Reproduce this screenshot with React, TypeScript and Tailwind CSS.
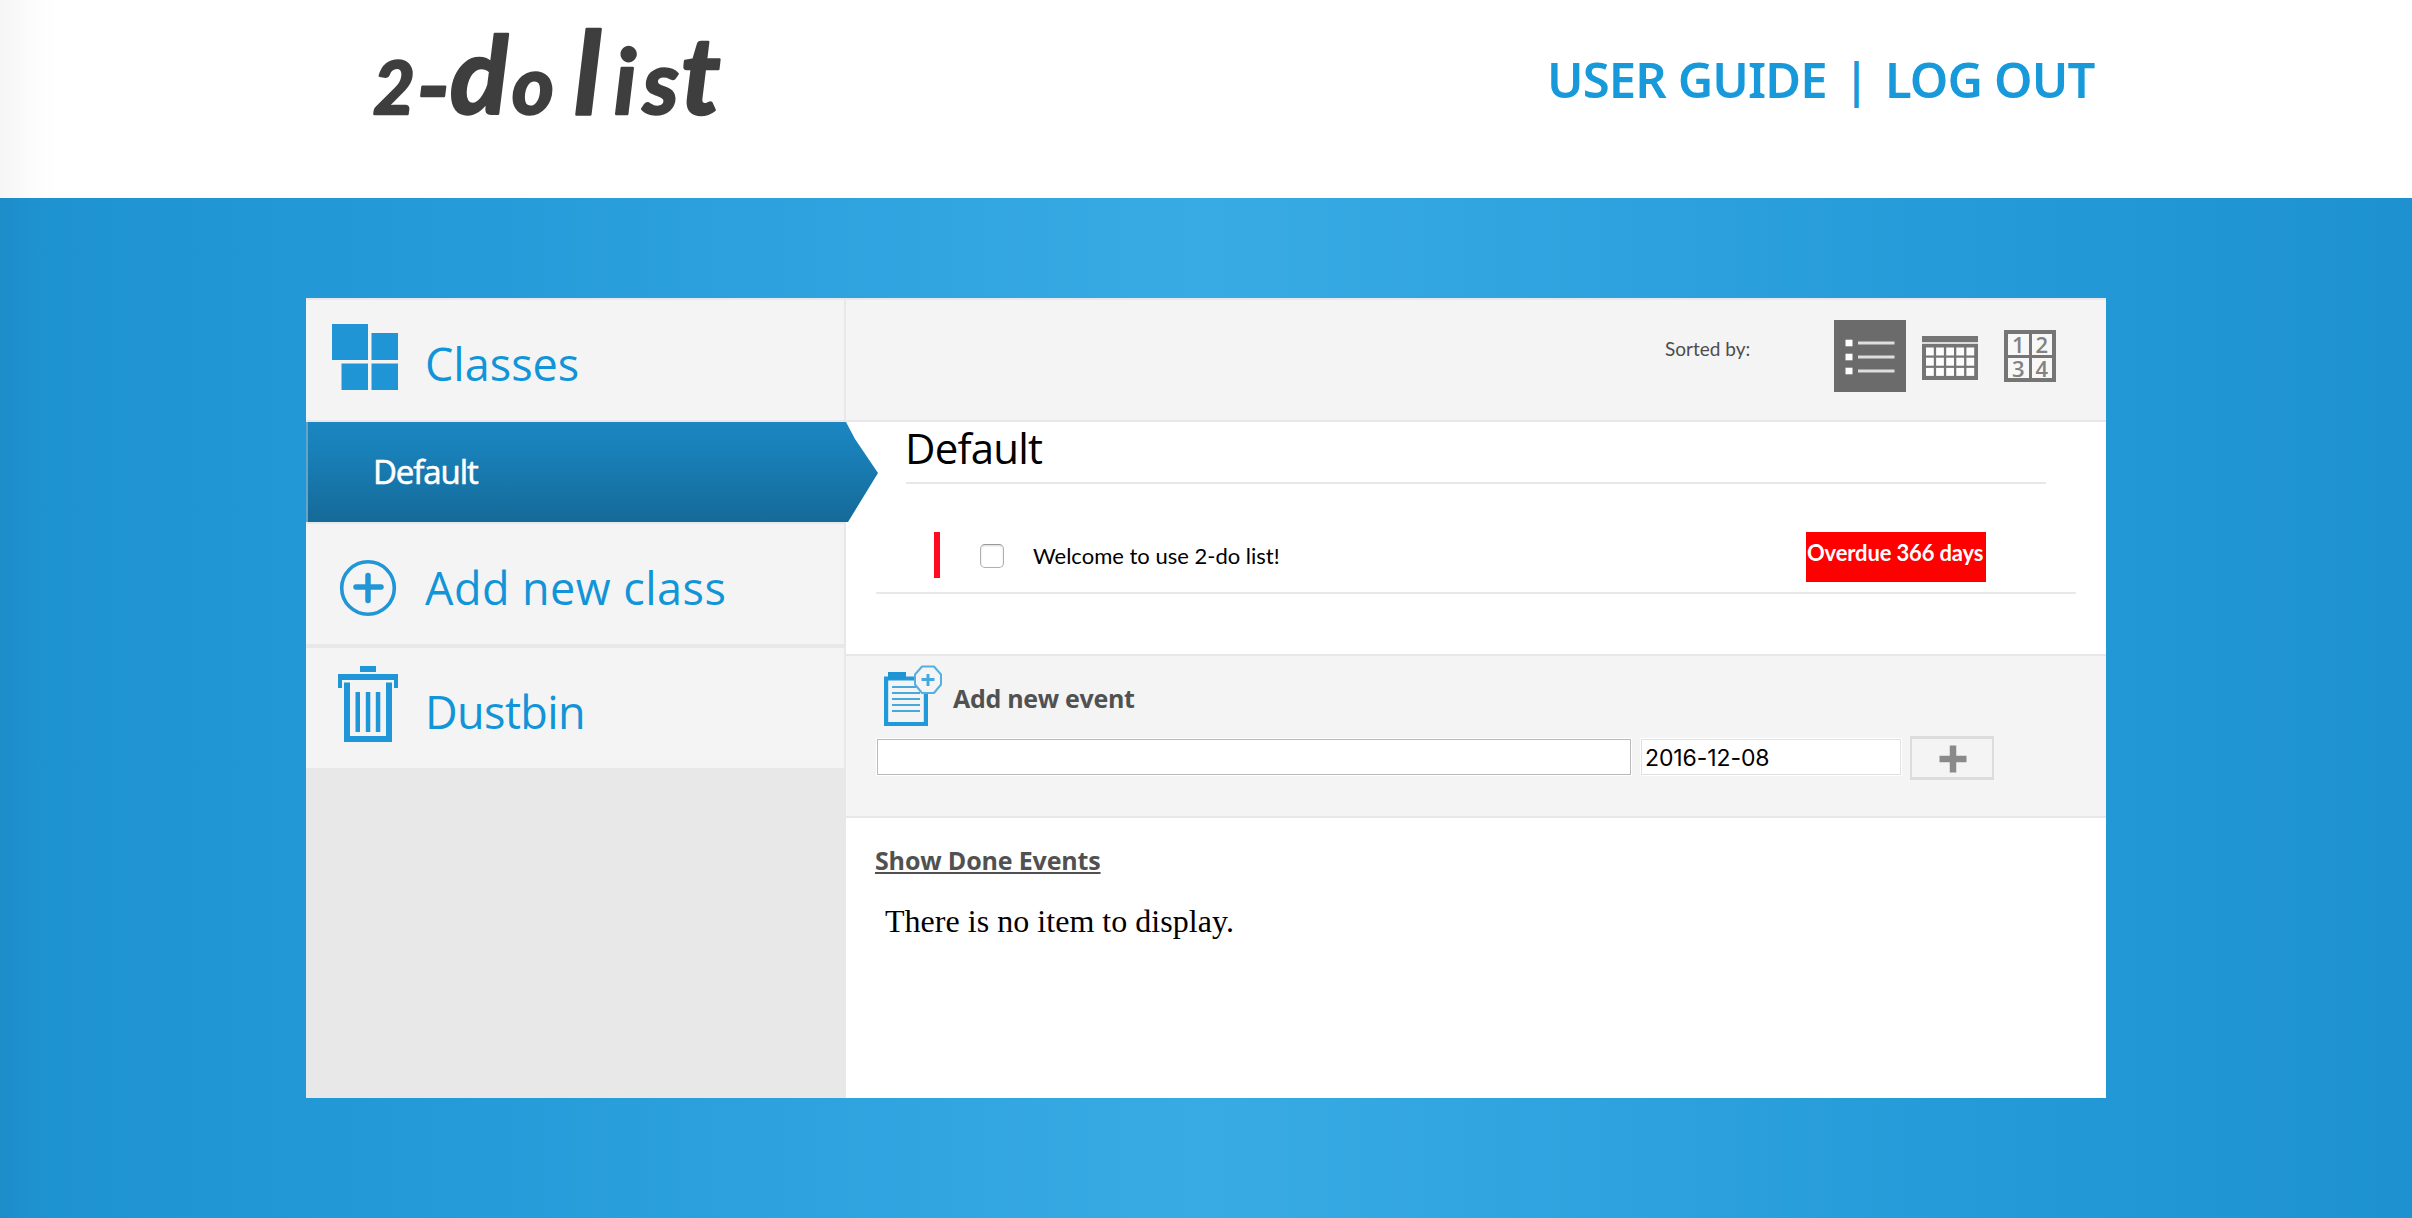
import type { ReactNode } from 'react';

function Logo() {
  return (
    <svg
      className="h-[160px] w-[400px]"
      viewBox="0 0 400 160"
      fill="#3e3e3e"
      stroke="#3e3e3e"
      strokeWidth="2.500"
      strokeLinejoin="round"
      fontFamily="Lato, sans-serif"
      fontWeight="700"
      fontStyle="italic"
      role="img"
      aria-label="2-do list"
    >
      <text y="114">
        <tspan x="7" fontSize="72">2</tspan>
        <tspan x="51" fontSize="94" dy="6">-</tspan>
        <tspan x="84" fontSize="108" dy="-6">d</tspan>
        <tspan x="146" fontSize="80">o</tspan>
        <tspan fontSize="30"> </tspan>
        <tspan x="208" fontSize="114">l</tspan>
        <tspan x="248" fontSize="90">i</tspan>
        <tspan x="277" fontSize="88">s</tspan>
        <tspan x="315" fontSize="108">t</tspan>
      </text>
    </svg>
  );
}

function SquaresIcon() {
  return (
    <svg className="h-[68px] w-[67px]" viewBox="0 0 67 68" fill="#1f95d5">
      <rect x="0" y="1" width="36" height="36" />
      <rect x="39.500" y="10" width="26.500" height="27" />
      <rect x="9.500" y="40.500" width="26.500" height="26.500" />
      <rect x="39.500" y="40.500" width="26.500" height="26.500" />
    </svg>
  );
}

function PlusCircleIcon() {
  return (
    <svg className="h-[58px] w-[58px]" viewBox="0 0 58 58" fill="none" stroke="#2196d6">
      <circle cx="29" cy="29" r="26.300" strokeWidth="3.600" />
      <path d="M29 16.500v25M17 28h25" strokeWidth="5.500" strokeLinecap="round" />
    </svg>
  );
}

function TrashIcon() {
  return (
    <svg className="h-[76px] w-[62px]" viewBox="0 0 62 76" fill="#1f96d7">
      <rect x="23" y="0" width="16" height="6" />
      <path d="M1 8h60v14h-4v-8H5v8H1z" />
      <path d="M7 16.500h6v53.500h36V16.500h6V76H7z" />
      <rect x="18.500" y="26" width="4.500" height="40" />
      <rect x="28.800" y="26" width="4.500" height="40" />
      <rect x="38.800" y="26" width="4.500" height="40" />
    </svg>
  );
}

function ListIcon() {
  return (
    <svg className="h-[72px] w-[72px]" viewBox="0 0 72 72">
      <rect width="72" height="72" fill="#6b6b6b" />
      {[23, 37, 51].map((y) => (
        <g key={y}>
          <rect x="11.500" y={y - 3.3} width="7" height="6.600" fill="#fff" />
          <rect x="24" y={y - 1.5} width="36.500" height="3" fill="#dedede" />
        </g>
      ))}
    </svg>
  );
}

function CalendarIcon() {
  return (
    <svg className="h-[46px] w-[58px]" viewBox="0 0 58 46" fill="#757575">
      <rect x="1" y="1" width="56" height="6" />
      <rect x="1" y="7" width="56" height="2" fill="#dcdcdc" />
      <rect x="1" y="9" width="56" height="36" />
      {[0, 1, 2].map((r) =>
        [0, 1, 2, 3, 4].map((c) => (
          <rect key={`${r}-${c}`} x={5 + c * 10.1} y={12.5 + r * 10.2} width="7.800" height="8" fill="#fcfcfc" />
        )),
      )}
    </svg>
  );
}

function NumbersIcon() {
  return (
    <div className="grid h-[52px] w-[52px] grid-cols-2 gap-[3px] bg-[#757575] p-1 font-['Open_Sans',sans-serif] text-[22px] font-semibold leading-[20.5px] text-[#828282]">
      {['1', '2', '3', '4'].map((n) => (
        <span key={n} className="bg-[#f7f7f7] text-center">
          {n}
        </span>
      ))}
    </div>
  );
}

function NoteIcon() {
  return (
    <svg className="h-[62px] w-[60px]" viewBox="0 0 60 62" fill="none" stroke="#209ada">
      <path d="M4.100 13.500h39.800v45.500H4.100z" strokeWidth="4.200" />
      <rect x="6" y="7" width="18" height="7" fill="#2095d5" stroke="none" />
      <path d="M10 22h24M10 28h28M10 34h28M10 40h28M10 46h28" strokeWidth="2.200" stroke="#45a9de" />
      <path d="M40 1.500h12l7 8v10l-7 8.500H40l-7-8.500v-10z" fill="#f4f4f4" strokeWidth="2" stroke="#55b0e0" strokeLinejoin="round" />
      <path d="M46 9v12M39.500 14.500h13" strokeWidth="3" stroke="#45a9de" />
    </svg>
  );
}

function SideItem({ icon, iconClass, label, className }: { icon: ReactNode; iconClass: string; label: string; className: string }) {
  return (
    <div className={`flex items-start border-r-2 border-[#e8e8e8] bg-[#f4f4f4] font-['Open_Sans',sans-serif] text-[45px] leading-[60px] text-[#1294d8] ${className}`}>
      <div className="w-[119px] shrink-0">
        <div className={iconClass}>{icon}</div>
      </div>
      {label}
    </div>
  );
}

function Sidebar() {
  return (
    <aside className="relative z-10 w-[540px] shrink-0 bg-[#e8e8e8]">
      <div className="h-[124px] border-y-2 border-[#e8e8e8]">
        <SideItem className="h-[120px] pt-[34px]" iconClass="ml-[26px] -mt-[11px]" icon={<SquaresIcon />} label="Classes" />
      </div>
      <div className="relative flex h-[100px] w-[572px] items-center">
        <svg className="absolute inset-0 h-full w-full" viewBox="0 0 572 100">
          <defs>
            <linearGradient id="active" x1="0" y1="0" x2="0" y2="1">
              <stop offset="0" stopColor="#1b86c1" />
              <stop offset="0.250" stopColor="#1981ba" />
              <stop offset="1" stopColor="#156a98" />
            </linearGradient>
          </defs>
          <path d="M0 0H540L549 17L572 51L542 100H0z" fill="url(#active)" />
          <path d="M0 0H2V100H0z" fill="#65a4c8" />
        </svg>
        <span className="relative ml-[67px] font-['Open_Sans',sans-serif] text-[33px] font-medium leading-[44px] tracking-[-1.1px] text-white [-webkit-text-stroke:0.6px_white]">Default</span>
      </div>
      <div className="border-y-2 border-[#e8e8e8]">
        <SideItem className="h-[120px] pt-[34px] tracking-[0.45px]" iconClass="ml-[33px] mt-px" icon={<PlusCircleIcon />} label="Add new class" />
      </div>
      <div className="border-t-2 border-[#e8e8e8]">
        <SideItem className="h-[120px] pt-[34px] tracking-[-0.6px]" iconClass="ml-[31px] -mt-[16px]" icon={<TrashIcon />} label="Dustbin" />
      </div>
    </aside>
  );
}

function Toolbar() {
  return (
    <div className="flex h-[124px] items-start border-y-2 border-[#e8e8e8] bg-[#f4f4f4] pl-[819px]">
      <span className="mt-[34px] w-[169px] font-['Lato',sans-serif] text-[19px] leading-[30px] text-[#4d4d4d]">Sorted by:</span>
      <div className="mt-[20px]">
        <ListIcon />
      </div>
      <div className="ml-[15px] mt-[35px]">
        <CalendarIcon />
      </div>
      <div className="ml-[25px] mt-[30px]">
        <NumbersIcon />
      </div>
    </div>
  );
}

function EventList() {
  return (
    <section className="h-[232px]">
      <h1 className="ml-[60px] h-[62px] w-[1140px] border-b-2 border-[#e8e8e8] pt-px font-['Open_Sans',sans-serif] text-[42px] leading-[50px] tracking-[-0.8px] text-black">
        <span className="-ml-px">Default</span>
      </h1>
      <div className="ml-[30px] mt-[48px] flex h-[62px] w-[1200px] items-start border-b-2 border-[#e8e8e8]">
        <div className="ml-[58px] h-[46px] w-[6px] bg-[#ff0a20]" />
        <div className="ml-[40px] mt-[12px] h-6 w-6 rounded-[5px] border border-[#b0b0b0] border-t-[#989898] bg-white shadow-[inset_0_1px_2px_rgba(0,0,0,0.15)]" />
        <span className="ml-[29px] mt-[9px] w-[773px] font-['Lato',sans-serif] text-[22px] leading-[30px] text-black">Welcome to use 2-do list!</span>
        <span className="h-[50px] w-[180px] whitespace-nowrap bg-[#ff0000] pl-px pt-[6px] font-['Lato',sans-serif] text-[22px] font-bold leading-[30px] tracking-[-0.15px] text-white">Overdue 366 days</span>
      </div>
    </section>
  );
}

function AddEvent() {
  return (
    <section className="h-[164px] border-y-2 border-[#e8e8e8] bg-[#f4f4f4]">
      <div className="flex items-start pl-[36px]">
        <div className="mt-[9px]">
          <NoteIcon />
        </div>
        <h2 className="ml-[11px] mt-[24px] font-['Open_Sans',sans-serif] text-[25px] font-bold leading-[36px] tracking-[-0.3px] text-[#515151]">Add new event</h2>
      </div>
      <div className="ml-[30px] mt-[11px] flex items-start">
        <div className="h-[38px] w-[756px] border border-white">
          <div className="h-full border border-[#bababa] bg-white" />
        </div>
        <div className="ml-[8px] h-[38px] w-[262px] border border-white">
          <div className="h-full border border-[#e0e0e0] bg-white pl-[3px] font-['Inter',sans-serif] text-[23px] leading-[37px] tracking-[-0.1px] text-black">2016-12-08</div>
        </div>
        <button className="-mt-[2px] ml-[8px] flex h-[44px] w-[84px] items-center justify-center border-x-2 border-y-[3px] border-[#dcdcdc]">
          <svg className="ml-[2px] mt-[2px] h-7 w-7" viewBox="0 0 28 28" fill="none" stroke="#8a8a8a" strokeWidth="6.500">
            <path d="M14 .500v27M.500 14h27" />
          </svg>
        </button>
      </div>
    </section>
  );
}

function DoneEvents() {
  return (
    <section className="pl-[29px] pt-[24px]">
      <a className="block w-[226px] whitespace-nowrap font-['Open_Sans',sans-serif] text-[25px] font-bold leading-[36px] tracking-[-0.15px] text-[#515151] underline decoration-2 underline-offset-2">Show Done Events</a>
      <p className="ml-[10px] mt-[23px] font-['Liberation_Serif',serif] text-[32px] leading-[40px] tracking-[0.03px] text-black">There is no item to display.</p>
    </section>
  );
}

export default function App() {
  return (
    <div className="relative flex h-[1218px] w-[2412px] flex-col overflow-hidden bg-white">
      <header className="flex h-[198px] shrink-0 items-start">
        <div className="ml-[366px]">
          <Logo />
        </div>
        <nav className="ml-auto mr-[316px] mt-[49px] flex whitespace-nowrap font-['Noto_Sans',sans-serif] text-[49px] font-semibold leading-[60px] tracking-[-0.9px] text-[#1799da]">
          <a className="w-[280px]">USER GUIDE</a>
          <span className="w-[58px] text-center text-[46px]">|</span>
          <a className="w-[211px]">LOG OUT</a>
        </nav>
      </header>
      <main className="flex-1 bg-[linear-gradient(90deg,#1e92d1_0%,#259bd9_20%,#38abe4_50%,#259bd9_80%,#1e92d1_100%)] pl-[306px] pt-[100px]">
        <div className="flex h-[800px] w-[1800px] bg-white">
          <Sidebar />
          <div className="flex-1">
            <Toolbar />
            <EventList />
            <AddEvent />
            <DoneEvents />
          </div>
        </div>
      </main>
      <div className="pointer-events-none absolute inset-y-0 left-0 w-[60px] bg-[linear-gradient(90deg,rgba(0,0,0,0.04),rgba(0,0,0,0.012)_50%,transparent)]" />
    </div>
  );
}
